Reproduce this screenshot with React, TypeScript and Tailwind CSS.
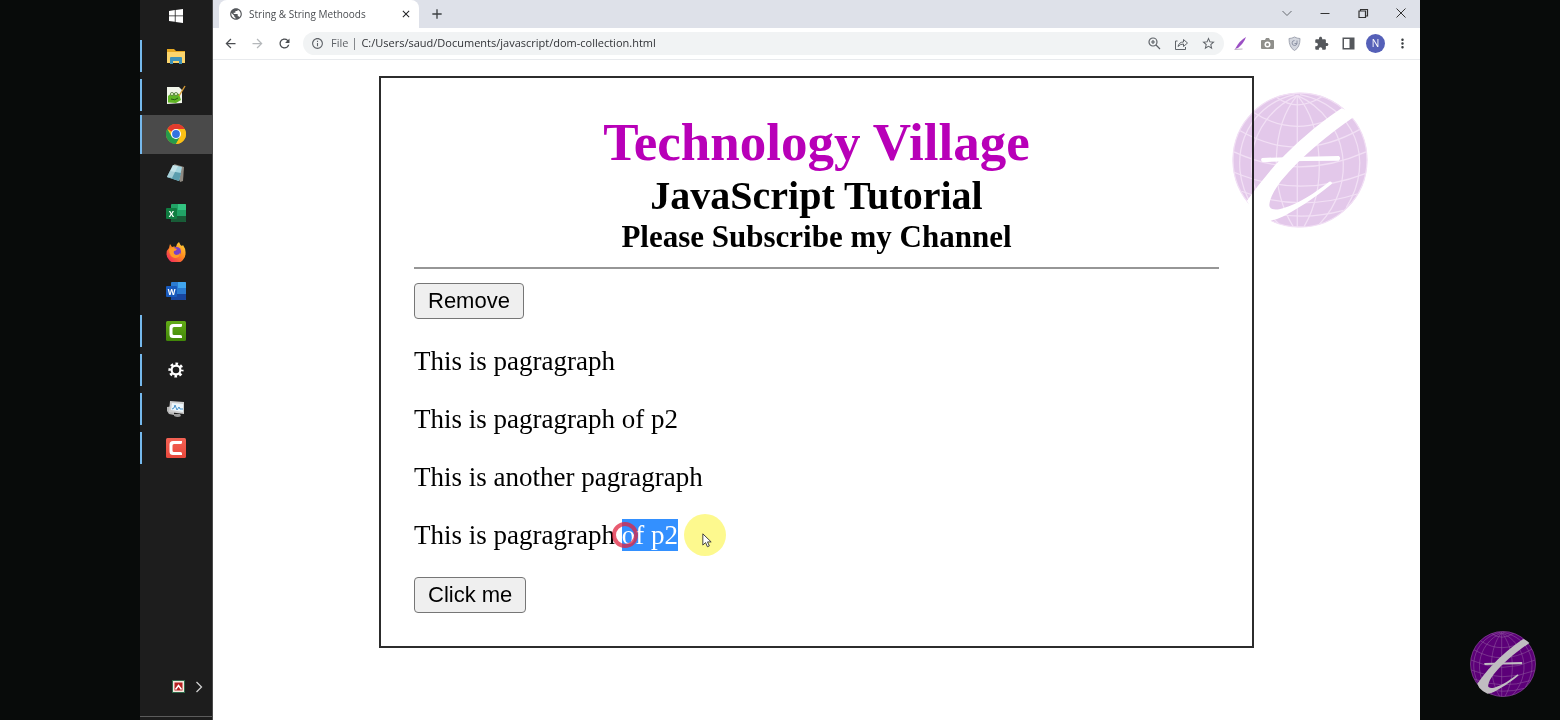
import React from "react";
import {
  MdPublic, MdClose, MdAdd, MdArrowBack, MdArrowForward, MdRefresh, MdInfoOutline,
  MdStarBorder, MdMoreVert,
} from "react-icons/md";

function Globe({ sphere, grid, stroke, className }: { sphere: string; grid: string; stroke: string; className: string }) {
  return (
    <svg viewBox="0 0 200 200" className={className} aria-hidden="true">
      <circle cx="100" cy="100" r="99" fill={sphere} />
      <g fill="none" stroke={grid} strokeWidth="1.8">
        <circle cx="100" cy="100" r="98.5" />
        <path d="M96 5V199" />
        <path d="M96 5C58 50 54 140 90 198M96 5C20 40 5 135 68 193M92 4C20 20-12 100 30 168" />
        <path d="M96 5C134 50 140 140 106 198M96 5C172 40 186 135 128 195M100 4C180 20 212 100 168 170" />
        <path d="M66 8Q96 30 132 7M32 30Q96 72 168 28M12 57Q98 106 188 55M3 88Q98 132 197 88M3 118Q98 158 196 120M14 146Q98 178 184 150M34 172Q98 192 164 174" />
      </g>
      <path
        fill={stroke}
        d="M161 24C134 42 95 72 56 116Q38 137 22 160L28 172Q38 184 53 190Q65 188 75 183C92 175 120 157 147 135Q147 131 143 132C121 149 99 164 75 171C62 175 54 172 55 165C56 155 63 143 72 131C104 92 143 62 180 36Q171 27 161 24Z"
      />
      <path fill={stroke} d="M44 97Q100 95 157 94Q161 97 157 101Q100 101 45 103Q41 100 44 97Z" />
    </svg>
  );
}

const svg = { viewBox: "0 0 20 20", className: "size-5", "aria-hidden": true } as const;

const WindowsIcon = () => (
  <svg {...svg}><path fill="#fff" d="M3 5l5.800-.9v5.400H3zM9.600 4L17 3v6.500H9.600zM3 10.300h5.800v5.500L3 15zM9.600 10.300H17V17l-7.400-1z" /></svg>
);
const FolderIcon = () => (
  <svg {...svg}>
    <path fill="#e5a822" d="M1 3h7l2 2h9v12H1z" />
    <path fill="#fbd56c" d="M1 6h18v11H1z" />
    <path fill="#3e92b8" d="M4 18v-6q0-1 1-1h10q1 0 1 1v6h-3v-3H7v3z" />
  </svg>
);
const NotepadPlusIcon = () => (
  <svg {...svg}>
    <path fill="#f1f5e9" d="M1 2h12l3 3v13L1 19z" />
    <path fill="#5fb524" d="M2 11q4-5 11-2l2 6-5 3-8-.5z" />
    <circle cx="6" cy="9" r="1.600" fill="#d9efbc" stroke="#4b6b3a" strokeWidth=".7" /><circle cx="10" cy="9" r="1.600" fill="#d9efbc" stroke="#4b6b3a" strokeWidth=".7" />
    <path d="M5 14q4 2 7-1" stroke="#285a16" fill="none" />
    <path d="M19 1l-6 10" stroke="#d49a36" strokeWidth="1.400" />
  </svg>
);
const ChromeIcon = () => (
  <svg {...svg}>
    <circle cx="10" cy="10" r="10" fill="#fbc116" />
    <path fill="#e33b2e" d="M10 10L1.300 5A10 10 0 0 1 18.700 5z" />
    <path fill="#269b4b" d="M1.300 5A10 10 0 0 0 10 20l4.300-7.500L10 10 5.700 12.500z" />
    <path fill="#fbc116" d="M10 5h8.700A10 10 0 0 1 10 20l4.300-7.500z" />
    <circle cx="10" cy="10" r="5" fill="#fff" /><circle cx="10" cy="10" r="3.900" fill="#3472e0" />
  </svg>
);
const NotebookIcon = () => (
  <svg {...svg}>
    <path fill="#8f8a82" d="M8 1l10 3-1 14-3 1z" />
    <path fill="#a4d5df" d="M7 2l9 2-3 14L1 14z" />
    <path fill="#5b9dae" d="M4 8l11 2-2 8L1 14z" />
    <path fill="#d8edf0" d="M7 2l5 1-6 12-5-1z" opacity=".6" />
  </svg>
);
function OfficeIcon({ letter, dark, mid, light, tile }: { letter: string; dark: string; mid: string; light: string; tile: string }) {
  return (
    <svg {...svg}>
      <rect x="5" y="1" width="15" height="18" rx="1" fill={mid} />
      <path fill={light} d="M12 1h7q1 0 1 1v5h-8z" />
      <path fill={dark} d="M5 13h15v5q0 1-1 1H6q-1 0-1-1z" />
      <rect y="5" width="11" height="11" rx="1" fill={tile} />
      <text x="5.500" y="13.500" fontSize="8" fontWeight="700" textAnchor="middle" fill="#fff" fontFamily="Open Sans, sans-serif">{letter}</text>
    </svg>
  );
}
const FirefoxIcon = () => (
  <svg {...svg}>
    <defs>
      <linearGradient id="fox" x1="1" y1="0" x2=".2" y2="1"><stop offset="0" stopColor="#ffe23c" /><stop offset=".5" stopColor="#ff8a20" /><stop offset="1" stopColor="#f0265c" /></linearGradient>
    </defs>
    <path fill="url(#fox)" d="M4 2l2 3q2-1 4 0 0-3 3-5 1 3 3 4l1-1q3 4 2.500 9a9.500 9 0 0 1-19 0Q.5 8 3 6z" />
    <circle cx="10.500" cy="9.500" r="4.500" fill="#7840c8" />
    <path fill="#ff9b26" d="M3 7q3-2 5-1l3 1q-1 2-3 2-1 3 2 4 3 0 4-2 0 5-5 5-6-1-6-9z" />
  </svg>
);
function CamtasiaIcon({ top, bottom, id }: { top: string; bottom: string; id: string }) {
  return (
    <svg {...svg}>
      <defs><linearGradient id={id} x2="0" y2="1"><stop stopColor={top} /><stop offset="1" stopColor={bottom} /></linearGradient></defs>
      <rect width="20" height="20" rx="1.500" fill={`url(#${id})`} />
      <path fill="#fff" d="M16 3v1.500q0 1.500-1.500 1.500H8Q6.500 6 6.500 7.500v5Q6.500 14 8 14h6.500q1.500 0 1.500 1.500V17H7q-3.500 0-3.500-3.500v-7Q3.500 3 7 3z" />
    </svg>
  );
}
const GearIcon = () => (
  <svg {...svg}>
    <g fill="none" stroke="#fff">
      <circle cx="10" cy="10" r="4.400" strokeWidth="2.200" />
      <circle cx="10" cy="10" r="6.300" strokeWidth="2.600" strokeDasharray="2.600 2.348" strokeDashoffset="1.300" />
    </g>
  </svg>
);
const MonitorIcon = () => (
  <svg {...svg}>
    <path fill="#b8b8b8" d="M1 8l7-1v9l-5-1-2-3z" /><path fill="#9b9b9b" d="M8 15h6l1 2q-3 2-7 0z" />
    <path fill="#cfcfcf" d="M4 2l14 1v12L3 13z" /><path fill="#edf6fb" d="M6 4l11 1v8L5 11z" />
    <path d="M6 10l2-1 1-3 2 5 2-3 1 2h3" stroke="#4b94cb" fill="none" />
  </svg>
);

type App = { name: string; icon: React.ReactNode; open?: boolean; active?: boolean };
const apps: App[] = [
  { name: "File Explorer", icon: <FolderIcon />, open: true },
  { name: "Notepad++", icon: <NotepadPlusIcon />, open: true },
  { name: "Chrome", icon: <ChromeIcon />, open: true, active: true },
  { name: "Notepad", icon: <NotebookIcon /> },
  { name: "Excel", icon: <OfficeIcon letter="X" dark="#185c37" mid="#21a366" light="#33c481" tile="#107c41" /> },
  { name: "Firefox", icon: <FirefoxIcon /> },
  { name: "Word", icon: <OfficeIcon letter="W" dark="#1846a0" mid="#2b7cd3" light="#41a5ee" tile="#185abd" /> },
  { name: "Camtasia", icon: <CamtasiaIcon id="green" top="#62ac17" bottom="#418608" />, open: true },
  { name: "Settings", icon: <GearIcon />, open: true },
  { name: "System Monitor", icon: <MonitorIcon />, open: true },
  { name: "Camtasia Recorder", icon: <CamtasiaIcon id="red" top="#f36254" bottom="#e8483c" />, open: true },
];

function Taskbar() {
  return (
    <nav className="flex w-[73px] shrink-0 flex-col border-r border-[#4a4a4a] bg-[#1d1d1d]" aria-label="Taskbar">
      <button aria-label="Start" className="flex h-9 items-center justify-center pb-1"><WindowsIcon /></button>
      <ul className="grid h-[432px] auto-rows-fr">
        {apps.map((a) => (
          <li key={a.name} className={a.active ? "flex items-center bg-[#4a4a4a]" : "flex items-center"}>
            <span className={a.active ? "h-full w-0.5 bg-[#76b9ed]" : a.open ? "h-8 w-0.5 bg-[#76b9ed]" : "w-0.5"} />
            <button aria-label={a.name} className="flex flex-1 justify-center pr-0.5">{a.icon}</button>
          </li>
        ))}
      </ul>
      <div className="mt-auto flex items-center justify-end gap-[10px] border-b border-[#5c5c5c] pr-[9px] pb-[23px]">
        <button aria-label="Input tool">
          <svg viewBox="0 0 13 13" className="size-[13px]"><path fill="#2d6a4a" d="M0 0h13v13H0z" /><path fill="#f6ece2" d="M1 1h11v11H1z" /><path fill="#b52222" d="M2.500 2.500h8v8h-8z" /><path d="M3.500 9.500l3-4 3 4" stroke="#fff" strokeWidth="1.500" fill="none" /></svg>
        </button>
        <button aria-label="Show hidden icons">
          <svg viewBox="0 0 8 12" className="h-3 w-2"><path d="M1.500 1l5 5-5 5" stroke="#d0d0d0" strokeWidth="1.300" fill="none" /></svg>
        </button>
      </div>
      <div className="h-[3px]" />
    </nav>
  );
}

function TabStrip() {
  return (
    <div className="flex h-7 bg-[#dee1e9] pl-[6px]">
      <div className="flex w-[200px] items-center rounded-t-lg bg-white pr-[7px] pl-[10px] text-[10px] text-[#4a4d51]">
        <MdPublic className="size-[14px] text-[#55585c]" />
        <span className="ml-[6px] flex-1 whitespace-nowrap">String &amp; String Methoods</span>
        <button aria-label="Close tab"><MdClose className="size-3 text-[#202124]" /></button>
      </div>
      <button aria-label="New tab" className="ml-[10px]"><MdAdd className="size-4 text-[#3c4043]" /></button>
      <div className="ml-auto flex items-center gap-[26px] pr-[13px] pb-[3px] text-[#333]">
        <button aria-label="Search tabs"><svg viewBox="0 0 12 12" className="size-3"><path d="M1.500 4l4.500 4.500L10.500 4" stroke="#666a70" fill="none" /></svg></button>
        <button aria-label="Minimize"><svg viewBox="0 0 12 12" className="size-3"><path d="M1.500 6.500h9" stroke="currentColor" /></svg></button>
        <button aria-label="Restore"><svg viewBox="0 0 12 12" className="size-3"><path d="M2 4h6.500v6.500H2zM3.500 4V2.500h7V9H8.500" stroke="currentColor" strokeWidth="1.200" fill="none" /></svg></button>
        <button aria-label="Close"><svg viewBox="0 0 12 12" className="size-3"><path d="M1.500 1.500l9 9m0-9l-9 9" stroke="currentColor" fill="none" /></svg></button>
      </div>
    </div>
  );
}

function Toolbar() {
  return (
    <div className="flex h-8 items-center border-b border-[#e8eaed] bg-white px-[10px] text-[#5f6368]">
      <div className="flex gap-3">
        <button aria-label="Back"><MdArrowBack className="size-[15px] text-[#4a4d51]" /></button>
        <button aria-label="Forward"><MdArrowForward className="size-[15px] text-[#b5b8bb]" /></button>
        <button aria-label="Reload"><MdRefresh className="size-[15px] text-[#4a4d51]" /></button>
      </div>
      <div className="ml-[11px] flex h-[23px] flex-1 items-center rounded-full bg-[#f1f3f4] pr-2 pl-2 text-[11px]">
        <MdInfoOutline className="size-[13px]" />
        <label htmlFor="address" className="ml-[7px]">File</label>
        <span className="mx-[6px] h-3 w-px bg-[#85888c]" />
        <input id="address" readOnly value="C:/Users/saud/Documents/javascript/dom-collection.html" className="min-w-0 flex-1 bg-transparent text-[#303236] outline-none" />
        <div className="flex gap-3">
          <button aria-label="Zoom">
            <svg viewBox="0 0 15 15" className="size-[15px]"><path d="M10 6A4 4 0 1 1 2 6a4 4 0 0 1 8 0zM9 9l4 4M6 4v4M4 6h4" stroke="currentColor" strokeWidth="1.200" fill="none" /></svg>
          </button>
          <button aria-label="Share">
            <svg viewBox="0 0 15 15" className="size-[15px]"><path d="M3.500 5H1.500v8.500h10V11M4 10.500Q5 6 9.500 6V3.500l4 3.500-4 3.500V8Q6 8 4 10.500z" stroke="currentColor" strokeWidth="1" fill="none" /></svg>
          </button>
          <button aria-label="Bookmark"><MdStarBorder className="size-[15px]" /></button>
        </div>
      </div>
      <div className="ml-[9px] flex items-center gap-3">
        <button aria-label="Pen extension">
          <svg viewBox="0 0 15 15" className="size-[15px]"><path fill="#9b4fc4" d="M13 1Q7 4 2 13l3-1Q11 7 13 1z" /><path d="M1.500 13.500l8-.5" stroke="#bdb0c2" /></svg>
        </button>
        <button aria-label="Screenshot">
          <svg viewBox="0 0 15 15" className="size-[15px]"><path fill="#8f8f8b" d="M2 4h3l1-2h3l1 2h3q1 0 1 1v7q0 1-1 1H2q-1 0-1-1V5q0-1 1-1z" /><circle cx="7.500" cy="8.500" r="3" fill="#fff" /><circle cx="7.500" cy="8.500" r="1.500" fill="#8f8f8b" /></svg>
        </button>
        <button aria-label="Ad shield">
          <svg viewBox="0 0 15 15" className="size-[15px]"><path fill="#d4d7df" stroke="#a2a6b2" d="M7.500 1Q10 2.500 13 2.500q0 9-5.500 12Q2 11.500 2 2.500 5 2.500 7.500 1z" /><path d="M7.500 4.500a2.500 2.500 0 1 0 2.500 3M7.500 7.500h2.500v-3" stroke="#8d93a5" fill="none" /></svg>
        </button>
        <button aria-label="Extensions">
          <svg viewBox="0 0 24 24" className="size-[15px]"><path fill="#55585c" d="M20.500 11H19V7c0-1.100-.9-2-2-2h-4V3.500C13 2.120 11.880 1 10.500 1S8 2.120 8 3.500V5H4c-1.100 0-1.990.9-1.990 2v3.800H3.500c1.490 0 2.700 1.210 2.700 2.700s-1.210 2.700-2.700 2.700H2V20c0 1.100.9 2 2 2h3.800v-1.500c0-1.490 1.210-2.700 2.700-2.700 1.490 0 2.700 1.210 2.700 2.700V22H17c1.100 0 2-.9 2-2v-4h1.500c1.380 0 2.500-1.120 2.500-2.500S21.880 11 20.500 11z" /></svg>
        </button>
        <button aria-label="Side panel">
          <svg viewBox="0 0 15 15" className="size-[15px]"><path fill="#55585c" d="M1.500 1.500h12v12h-12zM3 3v9h5.500V3z" fillRule="evenodd" /></svg>
        </button>
        <button aria-label="Profile" className="-mx-0.5 size-[19px] rounded-full bg-[#5560b8] text-[10px] leading-[19px] text-white">N</button>
        <button aria-label="Menu"><MdMoreVert className="size-[15px] text-[#3c4043]" /></button>
      </div>
    </div>
  );
}

const action = "block h-9 rounded-[4px] border border-[#767676] bg-[#efefef] px-[13px] font-['Liberation_Sans',Arial,sans-serif] text-[22px] leading-[34px] text-black";

function Page() {
  return (
    <main className="relative flex-1 bg-white px-4 pt-4 font-['Liberation_Serif','Times_New_Roman',serif] text-[27px] leading-[32px] text-black">
      <section className="mx-auto w-full max-w-[875px] border-2 border-[#2c2c2c] p-[33px]">
        <header className="text-center font-bold">
          <h1 className="text-[53px] leading-[62px] text-[#b800b8]">Technology Village</h1>
          <h2 className="text-[40px] leading-[45px]">JavaScript Tutorial</h2>
          <h3 className="text-[31px] leading-[37px]">Please Subscribe my Channel</h3>
        </header>
        <hr className="mt-3 mb-[14px] border-t-2 border-[#969696]" />
        <button className={action}>Remove</button>
        <div className="my-[26px] space-y-[26px]">
          <p>This is pagragraph</p>
          <p>This is pagragraph of p2</p>
          <p>This is another pagragraph</p>
          <p>
            This is pagragraph{" "}
            <span className="relative inline-block bg-[#3390ff] text-white">
              of p2
              <span className="absolute top-[3px] -left-[10px] size-[26px] rounded-full border-4 border-[#e02440]/75" />
              <span className="absolute -top-[5px] left-full ml-[6px] size-[42px] rounded-full bg-[#fdf98e]">
                <svg viewBox="0 0 12 18" className="absolute top-[19px] left-[18px] h-[15px] w-[10px]">
                  <path d="M1 1v13.500l3.300-3 2.200 5 2.300-1-2.200-4.800H11z" fill="#fff" stroke="#333" strokeWidth="1.100" />
                </svg>
              </span>
            </span>
          </p>
        </div>
        <button className={action}>Click me</button>
      </section>
      <Globe sphere="#e3c8ea" grid="#f2e0f5" stroke="#ffffff" className="absolute top-8 right-[52px] size-[136px] mix-blend-multiply" />
    </main>
  );
}

export default function App() {
  return (
    <div className="relative flex min-h-screen bg-[#080b0a] px-[140px] font-['Open_Sans','Noto_Sans',sans-serif]">
      <Taskbar />
      <div className="flex min-w-0 flex-1 flex-col">
        <TabStrip />
        <Toolbar />
        <Page />
      </div>
      <Globe sphere="#5c0078" grid="#8d559c" stroke="#c0bdc1" className="absolute right-6 bottom-[23px] size-[66px]" />
    </div>
  );
}
